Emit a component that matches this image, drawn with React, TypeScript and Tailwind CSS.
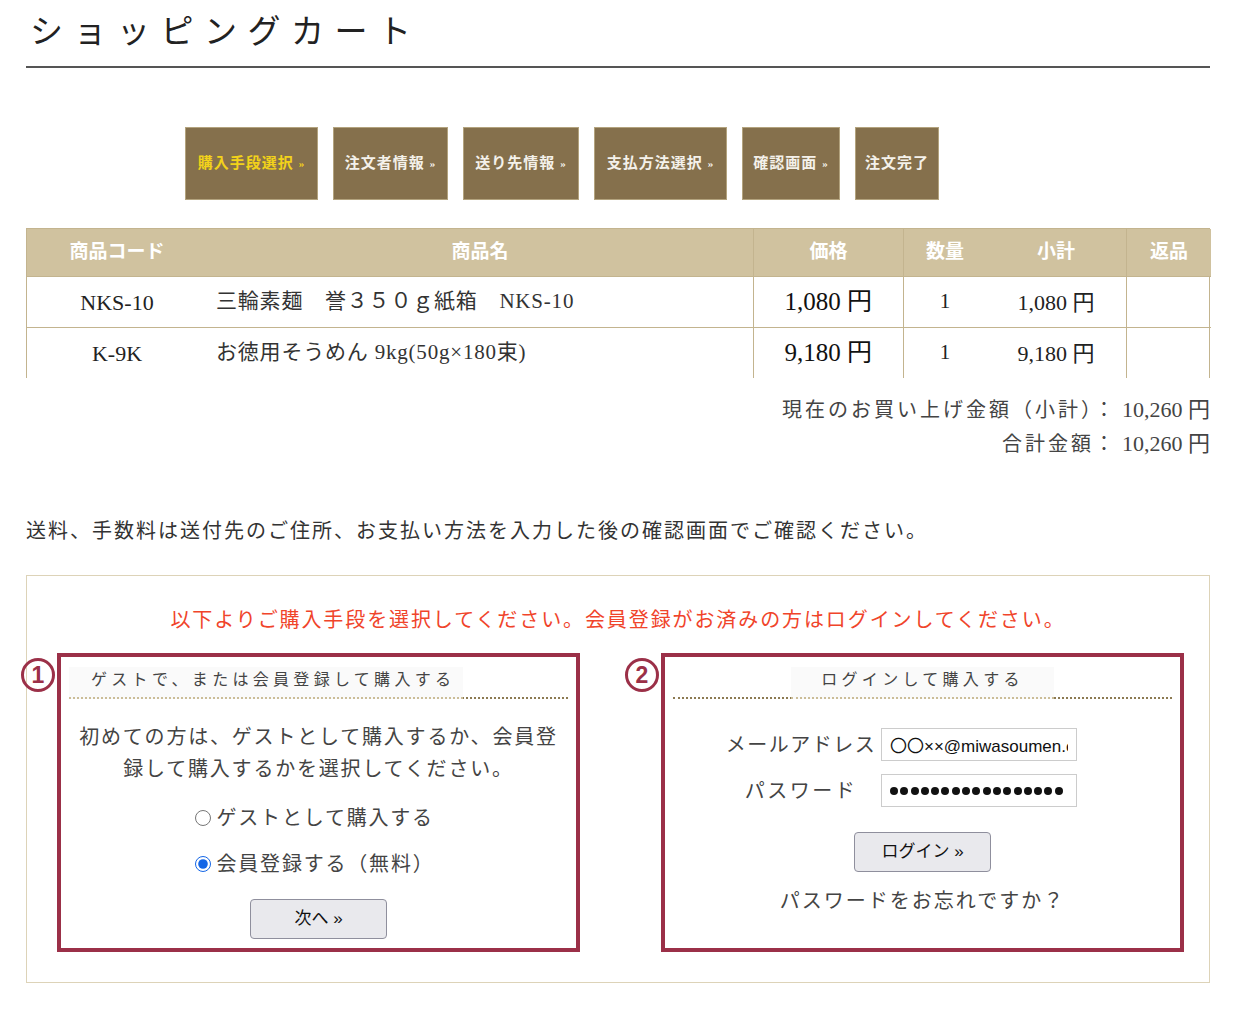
const serif = "font-['Liberation_Serif','Noto_Sans_CJK_JP',serif]";
const sans = "font-['Liberation_Sans','Noto_Sans_CJK_JP',sans-serif]";

const steps = [
  { label: "購入手段選択", arrow: true, active: true, w: "w-[133px]" },
  { label: "注文者情報", arrow: true, w: "w-[115px]" },
  { label: "送り先情報", arrow: true, w: "w-[116px]" },
  { label: "支払方法選択", arrow: true, w: "w-[133px]" },
  { label: "確認画面", arrow: true, w: "w-[98px]" },
  { label: "注文完了", arrow: false, w: "w-[84px]" },
];

const items = [
  { code: "NKS-10", name: "三輪素麺　誉３５０ｇ紙箱　NKS-10", price: "1,080 円", qty: "1", sub: "1,080 円" },
  { code: "K-9K", name: "お徳用そうめん 9kg(50g×180束)", price: "9,180 円", qty: "1", sub: "9,180 円" },
];

const Circled = ({ n }: { n: string }) => (
  <span className={`absolute -left-[40px] top-[1px] flex h-[34px] w-[34px] items-center justify-center rounded-full border-[3px] border-[#9b3048] text-[23px] font-bold leading-none text-[#9b3048] ${sans}`}>
    {n}
  </span>
);

const PanelHeading = ({ children, center }: { children: string; center?: boolean }) => (
  <div className={`mx-[8px] mt-[10px] flex border-b-2 border-dotted border-[#8c7a52] ${center ? "justify-center" : "justify-start"}`}>
    <span className={`-mb-[2px] border-b-2 border-dotted border-[#cbbd98] bg-[#fafafa] pb-[5px] pt-[1px] text-[16px] leading-[24px] tracking-[4.3px] text-[#444] ${center ? "px-[30px]" : "pl-[22px] pr-[8px]"}`}>
      {children}
    </span>
  </div>
);

export default function App() {
  return (
    <div className={`w-[1233px] bg-white pb-[30px] pl-[26px] text-[#333] ${serif}`}>
      <div className="w-[1184px]">
        <h1 className="border-b-2 border-[#555] pb-[14px] pl-[4px] pt-[12px] text-[33px] leading-[40px] tracking-[10.5px] text-[#222]">
          ショッピングカート
        </h1>

        <div className="ml-[159px] mt-[59px] flex gap-[15px]">
          {steps.map((s) => (
            <div
              key={s.label}
              className={`flex h-[73px] ${s.w} items-center justify-center gap-[5px] border border-[#b3a37e] bg-[#85704c] text-[15px] font-bold tracking-[1px] ${s.active ? "text-[#f2d21a]" : "text-[#f4f1ea]"}`}
            >
              <span>{s.label}</span>
              {s.arrow && <span className="text-[11px]">»</span>}
            </div>
          ))}
        </div>

        <div className="mt-[28px] grid grid-cols-[180px_546px_150px_83px_140px_85px] border-x border-t border-[#c3b48f]">
          <div className="flex h-[47px] items-center justify-center bg-[#d0c29f] text-[19px] font-bold text-white">商品コード</div>
          <div className="flex h-[47px] items-center justify-center bg-[#d0c29f] text-[19px] font-bold text-white">商品名</div>
          <div className="flex h-[47px] items-center justify-center border-l border-[#c3b48f] bg-[#d0c29f] text-[19px] font-bold text-white">価格</div>
          <div className="flex h-[47px] items-center justify-center border-l border-[#c3b48f] bg-[#d0c29f] text-[19px] font-bold text-white">数量</div>
          <div className="flex h-[47px] items-center justify-center bg-[#d0c29f] text-[19px] font-bold text-white">小計</div>
          <div className="flex h-[47px] items-center justify-center border-l border-[#c3b48f] bg-[#d0c29f] text-[19px] font-bold text-white">返品</div>
          {items.map((it) => (
            <div key={it.code} className="contents">
              <div className="flex h-[51px] items-center justify-center border-t border-[#c3b48f] text-[22px] text-[#222]">{it.code}</div>
              <div className="flex h-[51px] items-center border-t border-[#c3b48f] pl-[9px] text-[21px] tracking-[0.8px] text-[#333]">{it.name}</div>
              <div className="flex h-[51px] items-center justify-end border-l border-t border-[#c3b48f] pr-[31px] text-[25px] text-[#111]">{it.price}</div>
              <div className="flex h-[51px] items-center justify-center border-l border-t border-[#c3b48f] text-[21px] text-[#222]">{it.qty}</div>
              <div className="flex h-[51px] items-center justify-center border-t border-[#c3b48f] text-[22px] text-[#222]">{it.sub}</div>
              <div className="h-[51px] border-l border-t border-[#c3b48f]" />
            </div>
          ))}
        </div>

        <div className="mt-[15px] text-right text-[20px] leading-[33px] text-[#444]">
          <p>
            <span className="tracking-[3px]">現在のお買い上げ金額（小計）：</span> <span className="text-[22px]">10,260 円</span>
          </p>
          <p>
            <span className="tracking-[3px]">合計金額：</span> <span className="text-[22px]">10,260 円</span>
          </p>
        </div>

        <p className="mt-[55px] text-[20px] leading-[30px] tracking-[2px] text-[#333]">
          送料、手数料は送付先のご住所、お支払い方法を入力した後の確認画面でご確認ください。
        </p>

        <div className="mt-[29px] border border-[#ddd3b8] pb-[30px]">
          <p className="pt-[29px] text-center text-[20px] leading-[30px] tracking-[1.9px] text-[#f0442a]">
            以下よりご購入手段を選択してください。会員登録がお済みの方はログインしてください。
          </p>

          <div className="mt-[18px] flex gap-[81px] pl-[30px]">
            <div className="relative h-[299px] w-[523px] border-[4px] border-[#9b3048]">
              <Circled n="1" />
              <PanelHeading>ゲストで、または会員登録して購入する</PanelHeading>
              <p className="mt-[22px] px-[14px] text-center text-[20px] leading-[32px] tracking-[1.8px] text-[#444]">
                初めての方は、ゲストとして購入するか、会員登録して購入するかを選択してください。
              </p>
              <div className="mt-[17px] flex justify-center">
                <div className="flex flex-col gap-[14px] pr-[8px]">
                  <label className="flex items-center gap-[6px] text-[20px] leading-[32px] tracking-[1.8px] text-[#444]">
                    <input type="radio" name="mode" className="h-[16px] w-[16px] accent-[#1466e6]" />
                    ゲストとして購入する
                  </label>
                  <label className="flex items-center gap-[6px] text-[20px] leading-[32px] tracking-[1.8px] text-[#444]">
                    <input type="radio" name="mode" defaultChecked className="h-[16px] w-[16px] accent-[#1466e6]" />
                    会員登録する（無料）
                  </label>
                </div>
              </div>
              <div className="mt-[19px] flex justify-center">
                <button className={`h-[40px] w-[137px] rounded-[4px] border border-[#8f8f9d] bg-[#e9e9ed] text-[17px] text-[#111] ${sans}`}>
                  次へ »
                </button>
              </div>
            </div>

            <div className="relative h-[299px] w-[523px] border-[4px] border-[#9b3048]">
              <Circled n="2" />
              <PanelHeading center>ログインして購入する</PanelHeading>
              <div className="ml-[56px] mt-[29px] grid grid-cols-[160px_196px] gap-y-[13px]">
                <div className="flex h-[33px] items-center justify-center whitespace-nowrap text-[20px] tracking-[1.5px] text-[#444]">メールアドレス</div>
                <input
                  readOnly
                  value="〇〇××@miwasoumen.co.jp"
                  className={`h-[33px] w-[196px] border border-[#ccc] bg-white px-[8px] text-[17px] text-[#111] outline-none ${sans}`}
                />
                <div className="flex h-[33px] items-center justify-center whitespace-nowrap text-[20px] tracking-[2.5px] text-[#444]">パスワード</div>
                <div className="flex h-[33px] w-[196px] items-center gap-[2.3px] border border-[#ccc] bg-white px-[8px]">
                  {Array.from({ length: 17 }).map((_, i) => (
                    <span key={i} className="h-[8px] w-[8px] rounded-full bg-[#111]" />
                  ))}
                </div>
              </div>
              <div className="mt-[25px] flex justify-center">
                <button className={`h-[40px] w-[137px] rounded-[4px] border border-[#8f8f9d] bg-[#e9e9ed] text-[17px] text-[#111] ${sans}`}>
                  ログイン »
                </button>
              </div>
              <p className="mt-[13px] text-center text-[20px] leading-[32px] tracking-[2px] text-[#444]">
                パスワードをお忘れですか？
              </p>
            </div>
          </div>
        </div>
      </div>
    </div>
  );
}
